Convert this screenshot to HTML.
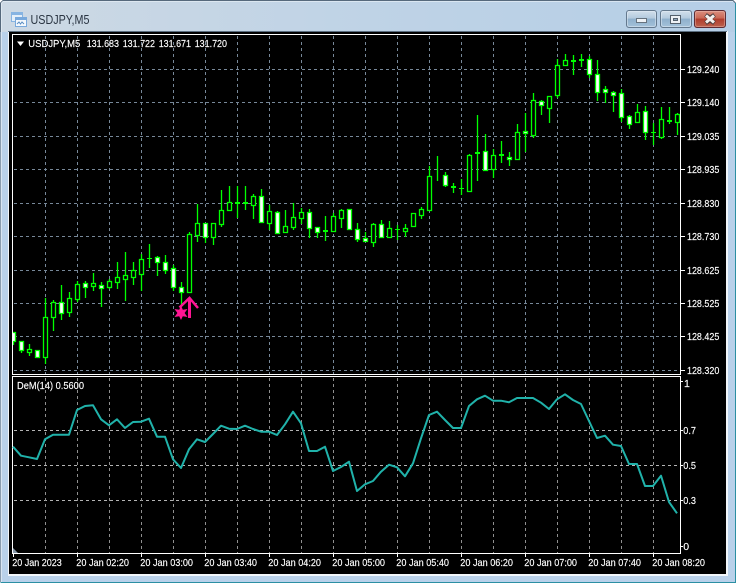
<!DOCTYPE html>
<html><head><meta charset="utf-8"><title>USDJPY,M5</title>
<style>
html,body{margin:0;padding:0;width:738px;height:584px;overflow:hidden;background:#fff}
svg{display:block}
text{font-family:"Liberation Sans",sans-serif;font-size:10.5px;fill:#fff;stroke:#fff;stroke-width:.15px}
</style></head><body>
<svg width="738" height="584" viewBox="0 0 738 584" xmlns="http://www.w3.org/2000/svg">
<defs>
<linearGradient id="t" x1="0" y1="0" x2="1" y2="0"><stop offset="0" stop-color="#cdd9e4"/><stop offset=".5" stop-color="#bfd3e6"/><stop offset="1" stop-color="#b5cee6"/></linearGradient>
<linearGradient id="b" x1="0" y1="0" x2="0" y2="1"><stop offset="0" stop-color="#d3e0ec"/><stop offset=".45" stop-color="#b4cade"/><stop offset=".5" stop-color="#8fb0cc"/><stop offset="1" stop-color="#a5c2da"/></linearGradient>
<linearGradient id="r" x1="0" y1="0" x2="0" y2="1"><stop offset="0" stop-color="#dc9080"/><stop offset=".45" stop-color="#c96856"/><stop offset=".5" stop-color="#b03c2c"/><stop offset="1" stop-color="#bd6450"/></linearGradient>
<clipPath id="m"><rect x="13" y="35" width="667" height="339"/></clipPath>
</defs>
<path d="M3 .5H733L735.5 3V582.5H.5V3Z" fill="#b9d1ea"/>
<path d="M3 1H733L735 3V32H1V3Z" fill="url(#t)"/>
<path d="M.5 32V3L3 .5H733L735.5 3" fill="none" stroke="#56697c"/>
<path d="M.5 32V582" fill="none" stroke="#8a9cae"/>
<path d="M735.5 3V582.5H.5" fill="none" stroke="#2b8fa3"/>
<path d="M1.5 582V3L3 1.5H733" fill="none" stroke="#e6eef5" stroke-opacity=".7"/>
<rect x="8" y="31" width="720" height="545" fill="#f2f6fa"/>
<rect x="8" y="31" width="719" height="1" fill="#5b6e80"/>
<rect x="9" y="32" width="717" height="542" fill="#000"/>

<!-- title icon -->
<g>
<rect x="11.500" y="12.500" width="11" height="9" fill="#e4eff9" stroke="#86b4e2"/>
<rect x="12" y="13" width="10" height="2" fill="#86b4e2"/>
<rect x="15.500" y="17.500" width="11" height="9" fill="#f4f9fd" stroke="#78a9dc"/>
<rect x="16" y="18" width="10" height="2" fill="#78a9dc"/>
<path d="M17 24l2-2 1.500 2 1.500-2 2 2" fill="none" stroke="#5c8fc4"/>
</g>
<text x="30.500" y="24" style="font-size:12.500px;fill:#2a3542;stroke:none" textLength="59" lengthAdjust="spacingAndGlyphs">USDJPY,M5</text>

<!-- buttons -->
<rect x="626.500" y="10.500" width="30" height="17" rx="2.500" fill="url(#b)" stroke="#64798e"/>
<rect x="627.500" y="11.500" width="28" height="15" rx="2" fill="none" stroke="#e6eef6" stroke-opacity=".5"/>
<rect x="636.500" y="18.500" width="10" height="4" fill="#eef2f6" stroke="#66727e"/>
<rect x="660.500" y="10.500" width="31" height="17" rx="2.500" fill="url(#b)" stroke="#64798e"/>
<rect x="661.500" y="11.500" width="29" height="15" rx="2" fill="none" stroke="#e6eef6" stroke-opacity=".5"/>
<rect x="670.500" y="15.500" width="10" height="8" fill="#eef2f6" stroke="#55616d"/>
<rect x="673.500" y="18.500" width="4" height="2" fill="#8fa6bc" stroke="#55616d"/>
<rect x="694.500" y="10.500" width="31" height="17" rx="2.500" fill="url(#r)" stroke="#5e2c34"/>
<rect x="695.500" y="11.500" width="29" height="15" rx="2" fill="none" stroke="#f0c8c0" stroke-opacity=".4"/>
<path d="M705.500 15l4.500 3 4.500-3M705.500 23l4.500-3 4.500 3" fill="none" stroke="#4a3a3a" stroke-width="4.500"/>
<path d="M706 15.500l4 3.500 4-3.500M706 22.500l4-3.500 4 3.500" fill="none" stroke="#f4f0ee" stroke-width="3"/>

<!-- frames -->
<rect x="12.500" y="34.500" width="668" height="340" fill="none" stroke="#fff"/>
<rect x="12.500" y="376.500" width="668" height="177" fill="none" stroke="#fff"/>

<!-- main grid -->
<path d="M14 69.500H680M14 102.500H680M14 136.500H680M14 169.500H680M14 203.500H680M14 236.500H680M14 270.500H680M14 303.500H680M14 336.500H680M14 370.500H680" stroke="#778899" stroke-dasharray="3 3" fill="none"/>
<path d="M45.500 36V374M77.500 36V374M109.500 36V374M141.500 36V374M173.500 36V374M205.500 36V374M237.500 36V374M269.500 36V374M301.500 36V374M333.500 36V374M365.500 36V374M397.500 36V374M429.500 36V374M461.500 36V374M493.500 36V374M525.500 36V374M557.500 36V374M589.500 36V374M621.500 36V374M653.500 36V374" stroke="#778899" stroke-dasharray="3 3" fill="none"/>

<!-- sub grid -->
<path d="M14 430.500H680M14 465.500H680M14 500.500H680" stroke="#b4b4b4" stroke-dasharray="3 3" fill="none"/>
<path d="M45.500 378V553M77.500 378V553M109.500 378V553M141.500 378V553M173.500 378V553M205.500 378V553M237.500 378V553M269.500 378V553M301.500 378V553M333.500 378V553M365.500 378V553M397.500 378V553M429.500 378V553M461.500 378V553M493.500 378V553M525.500 378V553M557.500 378V553M589.500 378V553M621.500 378V553M653.500 378V553" stroke="#8f8f8f" stroke-dasharray="3 3" fill="none"/>
<path d="M13 548L18 553H13Z" fill="#8899aa"/>

<!-- candles -->
<g clip-path="url(#m)">
<path fill="none" stroke="#0f0" stroke-width="1.300" d="M13.500 332V345M21.500 341V353M29.500 344V356M37.500 350V358M45.500 298V364M53.500 300V331M61.500 285V320M69.500 292V317M77.500 281V302M85.500 281V298M93.500 273V291M101.500 282V307M109.500 279V289M117.500 262V289M125.500 252V301M133.500 262V285M141.500 254V291M149.500 244V268M157.500 256V276M165.500 255V274M173.500 265V291M181.500 282V305M189.500 232V292M197.500 204V242M205.500 223V243M213.500 223V245M221.500 190V227M229.500 186V210M237.500 186V218M245.500 186V210M253.500 194V219M261.500 189V222M269.500 205V230M277.500 211V233M285.500 210V233M293.500 203V230M301.500 208V224M309.500 209V238M317.500 227V238M325.500 216V241M333.500 213V231M341.500 209V228M349.500 209V230M357.500 223V242M365.500 232V242M373.500 223V247M381.500 220V237M389.500 221V237M397.500 225V240M405.500 224V237M421.500 207V219M429.500 166V210M437.500 156V181M445.500 172V187M453.500 183V193M461.500 179V195M469.500 154V191M477.500 115V181M485.500 134V170M493.500 149V178M501.500 141V163M509.500 152V166M517.500 124V159M525.500 113V152M533.500 93V138M541.500 100V115M549.500 96V123M557.500 59V98M565.500 54V66M573.500 55V75M581.500 54V67M589.500 56V78M597.500 60V101M605.500 86V103M613.500 91V112M621.500 89V122M629.500 115V129M637.500 104V123M645.500 106V140M653.500 123V145M661.500 107V139M669.500 107V124M677.500 113V135"/>
<path fill="#000" stroke="#0f0" stroke-width="1.300" d="M27.500 349.500h4v3h-4zM43.500 317.500h4v40h-4zM51.500 302.500h4v15h-4zM67.500 298.500h4v14h-4zM75.500 284.500h4v15h-4zM91.500 283.500h4v3h-4zM107.500 281.500h4v6h-4zM115.500 277.500h4v5h-4zM123.500 275.500h4v4h-4zM131.500 270.500h4v7h-4zM139.500 259.500h4v15h-4zM187.500 234.500h4v58h-4zM195.500 223.500h4v12h-4zM211.500 223.500h4v14h-4zM219.500 210.500h4v14h-4zM227.500 202.500h4v8h-4zM251.500 196.500h4v9h-4zM267.500 211.500h4v12h-4zM283.500 226.500h4v6h-4zM291.500 217.500h4v10h-4zM299.500 212.500h4v6h-4zM331.500 216.500h4v15h-4zM339.500 210.500h4v8h-4zM371.500 224.500h4v18h-4zM387.500 228.500h4v9h-4zM403.500 228.500h4v3h-4zM411.500 213.500h4v13h-4zM419.500 209.500h4v6h-4zM427.500 176.500h4v34h-4zM467.500 155.500h4v36h-4zM491.500 155.500h4v14h-4zM515.500 132.500h4v27h-4zM531.500 100.500h4v35h-4zM547.500 96.500h4v12h-4zM555.500 65.500h4v30h-4zM563.500 60.500h4v5h-4zM635.500 112.500h4v10h-4zM659.500 119.500h4v18h-4zM675.500 114.500h4v8h-4z"/>
<path fill="#fff" stroke="#0f0" stroke-width="1.300" d="M11.500 332.500h4v9h-4zM19.500 341.500h4v9h-4zM35.500 350.500h4v7h-4zM59.500 302.500h4v11h-4zM83.500 283.500h4v4h-4zM99.500 285.500h4v3h-4zM155.500 257.500h4v5h-4zM163.500 262.500h4v8h-4zM171.500 268.500h4v19h-4zM179.500 287.500h4v5h-4zM203.500 223.500h4v14h-4zM259.500 196.500h4v26h-4zM275.500 212.500h4v21h-4zM307.500 212.500h4v16h-4zM315.500 227.500h4v5h-4zM347.500 209.500h4v20h-4zM355.500 229.500h4v10h-4zM363.500 238.500h4v3h-4zM379.500 224.500h4v13h-4zM443.500 175.500h4v10h-4zM483.500 151.500h4v19h-4zM507.500 157.500h4v2h-4zM523.500 131.500h4v2h-4zM539.500 101.500h4v4h-4zM587.500 59.500h4v15h-4zM595.500 74.500h4v18h-4zM603.500 89.500h4v3h-4zM611.500 92.500h4v3h-4zM619.500 93.500h4v24h-4zM627.500 116.500h4v8h-4zM643.500 111.500h4v21h-4z"/>
<path fill="none" stroke="#0f0" d="M147 258.500h5M395 229.500h5M459 188.500h5M651 132.500h5"/>
<path fill="none" stroke="#0f0" stroke-width="2" d="M235 203h5M243 203h5M323 231h5M451 187h5M475 153h5M499 155h5M571 61h5M579 60h5M667 121h5"/>
</g>

<!-- arrow and star -->
<path d="M179.500 307.500L189.500 298L198 308" fill="none" stroke="#ff1493" stroke-width="2.500"/>
<path d="M188 300H191V318H188Z" fill="#ff1493"/>
<path d="M181 305.500L182.800 309.800L187.500 309L184.600 313L187.500 317L182.800 316.200L181 320L179.200 316.200L174.500 317L177.400 313L174.500 309L179.200 309.800Z" fill="#ff1493"/>

<!-- DeM line -->
<path fill="none" stroke="#20b2aa" stroke-width="2" stroke-linejoin="round" d="M13 446.700L21 455.700 29 457.300 37 459 45 439.300 53 434.700 61 434.700 69 434.700 77 410 85 406 93 405.300 101 419.300 109 425.300 117 419.300 125 428 133 422 141 421.700 149 418.700 157 436.700 165 436.700 173 459.300 181 468 189 449.300 197 439.300 205 442 213 434 221 425.700 229 428.700 237 429 245 425.700 253 429 261 431.700 269 431.700 277 435 285 424.300 293 411.700 301 423.300 309 451 317 451 325 446.700 333 471 341 467 349 461.700 357 491 365 484.300 373 481 381 471.700 389 464.700 397 467.300 405 476.300 413 463.300 421 438.300 429 415 437 411.700 445 420 453 428 461 428 469 406 477 399.300 485 395.700 493 400.700 501 400.700 509 402.300 517 398 525 398 533 398 541 402.700 549 409 557 399.300 565 394.300 573 400 581 404 589 421 597 438 605 435.700 613 444.700 621 446 629 464 637 464 645 486 653 486 661 475.700 669 502 677 513.300"/>

<!-- ticks -->
<path stroke="#fff" fill="none" d="M680 69.500h5M680 102.500h5M680 136.500h5M680 169.500h5M680 203.500h5M680 236.500h5M680 270.500h5M680 303.500h5M680 336.500h5M680 370.500h5M680 381.500h3M680 430.500h3M680 465.500h3M680 500.500h3M680 546.500h3M13.500 553v4M77.500 553v4M141.500 553v4M205.500 553v4M269.500 553v4M333.500 553v4M397.500 553v4M461.500 553v4M525.500 553v4M589.500 553v4M653.500 553v4"/>

<!-- header -->
<path d="M17 41.500H24L20.500 46Z" fill="#fff"/>
<text x="28.300" y="47" textLength="52" lengthAdjust="spacingAndGlyphs">USDJPY,M5</text>
<text x="86.700" y="47" textLength="32.300" lengthAdjust="spacingAndGlyphs">131.683</text>
<text x="122.700" y="47" textLength="32.300" lengthAdjust="spacingAndGlyphs">131.722</text>
<text x="158.700" y="47" textLength="32.300" lengthAdjust="spacingAndGlyphs">131.671</text>
<text x="194.700" y="47" textLength="32.300" lengthAdjust="spacingAndGlyphs">131.720</text>
<text x="17" y="389" textLength="67" lengthAdjust="spacingAndGlyphs">DeM(14) 0.5600</text>

<!-- price labels -->
<g>
<text x="687" y="73" textLength="32.300" lengthAdjust="spacingAndGlyphs">129.240</text>
<text x="687" y="106" textLength="32.300" lengthAdjust="spacingAndGlyphs">129.140</text>
<text x="687" y="140" textLength="32.300" lengthAdjust="spacingAndGlyphs">129.035</text>
<text x="687" y="173" textLength="32.300" lengthAdjust="spacingAndGlyphs">128.935</text>
<text x="687" y="207" textLength="32.300" lengthAdjust="spacingAndGlyphs">128.830</text>
<text x="687" y="240" textLength="32.300" lengthAdjust="spacingAndGlyphs">128.730</text>
<text x="687" y="274" textLength="32.300" lengthAdjust="spacingAndGlyphs">128.625</text>
<text x="687" y="307" textLength="32.300" lengthAdjust="spacingAndGlyphs">128.525</text>
<text x="687" y="340" textLength="32.300" lengthAdjust="spacingAndGlyphs">128.425</text>
<text x="687" y="374" textLength="32.300" lengthAdjust="spacingAndGlyphs">128.320</text>
<text x="684" y="387">1</text>
<text x="683.300" y="434" textLength="12.700" lengthAdjust="spacingAndGlyphs">0.7</text>
<text x="683.300" y="469" textLength="12.700" lengthAdjust="spacingAndGlyphs">0.5</text>
<text x="683.300" y="504" textLength="12.700" lengthAdjust="spacingAndGlyphs">0.3</text>
<text x="683.300" y="550">0</text>
</g>

<!-- time labels -->
<g>
<text x="12.300" y="566" textLength="49.500" lengthAdjust="spacingAndGlyphs">20 Jan 2023</text>
<text x="76.300" y="566" textLength="52.700" lengthAdjust="spacingAndGlyphs">20 Jan 02:20</text>
<text x="140.300" y="566" textLength="52.700" lengthAdjust="spacingAndGlyphs">20 Jan 03:00</text>
<text x="204.300" y="566" textLength="52.700" lengthAdjust="spacingAndGlyphs">20 Jan 03:40</text>
<text x="268.300" y="566" textLength="52.700" lengthAdjust="spacingAndGlyphs">20 Jan 04:20</text>
<text x="332.300" y="566" textLength="52.700" lengthAdjust="spacingAndGlyphs">20 Jan 05:00</text>
<text x="396.300" y="566" textLength="52.700" lengthAdjust="spacingAndGlyphs">20 Jan 05:40</text>
<text x="460.300" y="566" textLength="52.700" lengthAdjust="spacingAndGlyphs">20 Jan 06:20</text>
<text x="524.300" y="566" textLength="52.700" lengthAdjust="spacingAndGlyphs">20 Jan 07:00</text>
<text x="588.300" y="566" textLength="52.700" lengthAdjust="spacingAndGlyphs">20 Jan 07:40</text>
<text x="652.300" y="566" textLength="52.700" lengthAdjust="spacingAndGlyphs">20 Jan 08:20</text>
</g>
</svg>
</body></html>
